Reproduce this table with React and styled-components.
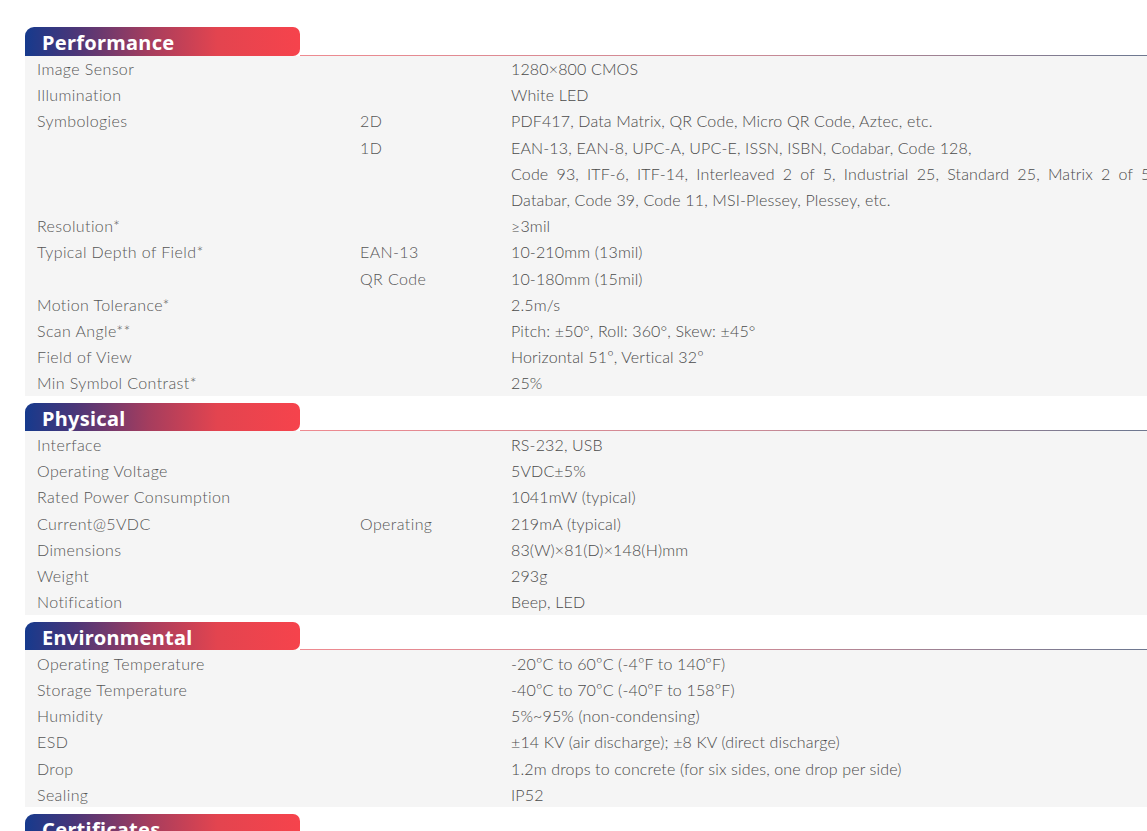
import styled, { createGlobalStyle } from "styled-components";

const GlobalStyle = createGlobalStyle`
  html, body {
    margin: 0;
    padding: 0;
    background: #ffffff;
    overflow: hidden;
  }
  body {
    font-family: "Lato", "Noto Sans", sans-serif;
  }
`;

const sections = [
  {
    title: "Performance",
    rows: [
      ["Image Sensor", "", "1280×800 CMOS"],
      ["Illumination", "", "White LED"],
      ["Symbologies", "2D", "PDF417, Data Matrix, QR Code, Micro QR Code, Aztec, etc."],
      ["", "1D", "EAN-13, EAN-8, UPC-A, UPC-E, ISSN, ISBN, Codabar, Code 128,"],
      ["", "", "Code 93, ITF-6, ITF-14, Interleaved 2 of 5, Industrial 25, Standard 25, Matrix 2 of 5,", true],
      ["", "", "Databar, Code 39, Code 11, MSI-Plessey, Plessey, etc."],
      ["Resolution*", "", "≥3mil"],
      ["Typical Depth of Field*", "EAN-13", "10-210mm (13mil)"],
      ["", "QR Code", "10-180mm (15mil)"],
      ["Motion Tolerance*", "", "2.5m/s"],
      ["Scan Angle**", "", "Pitch: ±50°, Roll: 360°, Skew: ±45°"],
      ["Field of View", "", "Horizontal 51º, Vertical 32º"],
      ["Min Symbol Contrast*", "", "25%"],
    ],
  },
  {
    title: "Physical",
    rows: [
      ["Interface", "", "RS-232, USB"],
      ["Operating Voltage", "", "5VDC±5%"],
      ["Rated Power Consumption", "", "1041mW (typical)"],
      ["Current@5VDC", "Operating", "219mA (typical)"],
      ["Dimensions", "", "83(W)×81(D)×148(H)mm"],
      ["Weight", "", "293g"],
      ["Notification", "", "Beep, LED"],
    ],
  },
  {
    title: "Environmental",
    rows: [
      ["Operating Temperature", "", "-20ºC to 60ºC (-4ºF to 140ºF)"],
      ["Storage Temperature", "", "-40ºC to 70ºC (-40ºF to 158ºF)"],
      ["Humidity", "", "5%~95% (non-condensing)"],
      ["ESD", "", "±14 KV (air discharge); ±8 KV (direct discharge)"],
      ["Drop", "", "1.2m drops to concrete (for six sides, one drop per side)"],
      ["Sealing", "", "IP52"],
    ],
  },
  {
    title: "Certificates",
    rows: [],
  },
];

const App = () => {
  return (
    <>
      <GlobalStyle />
      <Page>
        {sections.map((section) => (
          <Section key={section.title}>
            <SectionHead>
              <Tab>{section.title}</Tab>
              <HeadLine />
            </SectionHead>
            <Rows>
              {section.rows.map(([label, sub, value, wide], i) => (
                <Row key={i}>
                  <Label>{label}</Label>
                  <Label>{sub}</Label>
                  <Value $wide={wide}>{value}</Value>
                </Row>
              ))}
            </Rows>
          </Section>
        ))}
      </Page>
    </>
  );
};

const Page = styled.div`
  padding: 27px 0 0 25px;
  display: flex;
  flex-direction: column;
  gap: 7px;
  width: 1200px;
`;

const Section = styled.section`
  display: flex;
  flex-direction: column;
`;

const SectionHead = styled.div`
  display: flex;
  align-items: flex-end;
  height: 28.5px;
`;

const Tab = styled.div`
  width: 275px;
  height: 28.5px;
  box-sizing: border-box;
  padding: 3px 0 0 17px;
  border-radius: 9px 7px 7px 0;
  background: linear-gradient(90deg, #163a8d 0%, #4a3678 18%, #a53d5e 45%, #e3444f 70%, #f6434c 100%);
  color: #ffffff;
  font-family: "Noto Sans", "Open Sans", sans-serif;
  font-weight: 700;
  font-size: 20px;
  line-height: 26px;
  letter-spacing: 0.3px;
  overflow: hidden;
`;

const HeadLine = styled.div`
  flex: 1;
  height: 1px;
  background: linear-gradient(90deg, #ee8a90 0%, #c98a96 50%, #6f7890 90%);
`;

const Rows = styled.div`
  display: flex;
  flex-direction: column;
  background: #f5f5f5;
`;

const Row = styled.div`
  display: grid;
  grid-template-columns: 323px 151px 1fr;
  height: 26.2px;
  align-items: center;
  padding-left: 12px;
  color: #555555;
  font-size: 16px;
  font-weight: 300;
  white-space: nowrap;
`;

const Label = styled.span`
  letter-spacing: 0.4px;
`;

const Value = styled.span`
  color: #4a4a4a;
  letter-spacing: 0.15px;
  word-spacing: ${(props) => (props.$wide ? "3.6px" : "0")};
`;

export default App;
